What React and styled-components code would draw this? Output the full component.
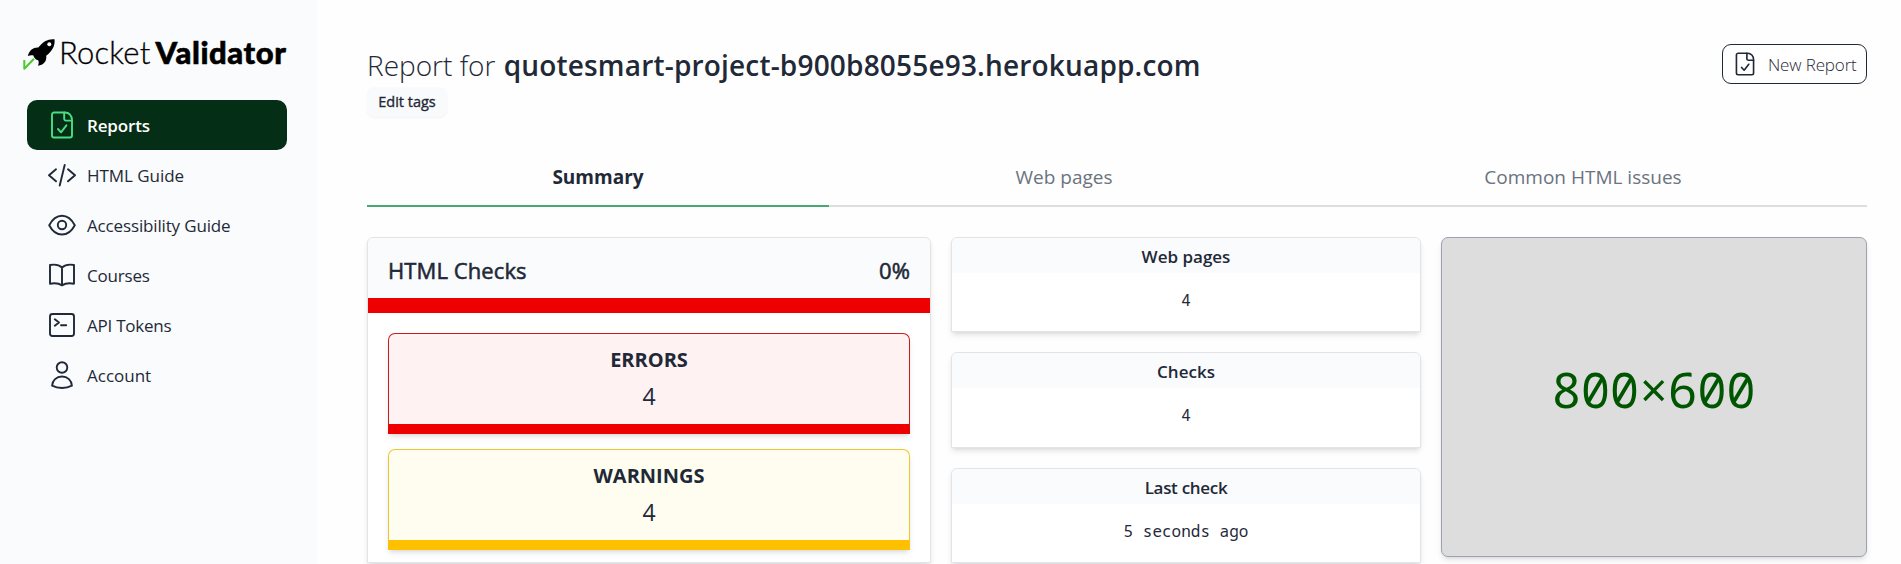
import React from "react";
import styled, { createGlobalStyle } from "styled-components";

const GlobalStyle = createGlobalStyle`
  *, *::before, *::after { box-sizing: border-box; }
  body {
    margin: 0;
    background: #fefefe;
    color: #1f2937;
    font-family: "Open Sans", "Noto Sans", sans-serif;
    overflow: hidden;
  }
`;

const Page = styled.div`
  display: flex;
  height: 564px;
  overflow: hidden;
`;

const Sidebar = styled.aside`
  flex: 0 0 317px;
  height: 564px;
  padding: 36px 30px 0 27px;
  background: #f9fbfd;
`;

const Logo = styled.div`
  display: flex;
  align-items: flex-start;
  height: 64px;
  margin-left: -5px;
  color: #000;
  font-family: Lato, sans-serif;
  font-size: 31px;
  line-height: 32px;
  white-space: nowrap;
`;

const LogoMark = styled.svg`
  flex: none;
  width: 37px;
  height: 36px;
`;

const LogoLight = styled.span`
  font-weight: 300;
  letter-spacing: 0.2px;
  -webkit-text-stroke: 0.3px currentColor;
`;

const LogoBold = styled.span`
  margin-left: 5px;
  font-weight: 900;
  letter-spacing: 0.6px;
  -webkit-text-stroke: 0.6px currentColor;
`;

const NavItem = styled.a`
  display: flex;
  align-items: center;
  gap: 11px;
  height: 50px;
  padding-left: 21px;
  border-radius: 10px;
  background: ${(p) => (p.$active ? "#052e16" : "transparent")};
  color: ${(p) => (p.$active ? "#4ade80" : "#1f2937")};
`;

const NavLabel = styled.span`
  padding-top: 1px;
  color: ${(p) => (p.$active ? "#fff" : "#1f2937")};
  font-size: 17px;
  font-weight: ${(p) => (p.$active ? 600 : 400)};
  letter-spacing: ${(p) => p.$spacing || 0}px;
  line-height: 24px;
  white-space: nowrap;
`;

const Icon = styled.svg`
  flex: none;
  width: ${(p) => p.$size || 28}px;
  height: ${(p) => p.$size || 28}px;
  fill: none;
  stroke: currentColor;
  stroke-width: 1.9;
  stroke-linecap: round;
  stroke-linejoin: round;
`;

const Main = styled.main`
  flex: 1;
  min-width: 0;
  padding: 44px 34px 0 50px;
`;

const Header = styled.header`
  display: flex;
  justify-content: space-between;
  align-items: flex-start;
  height: 110px;
`;

const Title = styled.h1`
  margin: 0;
  font-size: 28px;
  font-weight: 300;
  line-height: 43px;
  white-space: pre;
`;

const TitleSite = styled.strong`
  margin-left: 1px;
  font-weight: 600;
  letter-spacing: 0.18px;
`;

const TagButton = styled.button`
  display: block;
  width: 80px;
  height: 30px;
  padding: 0;
  border: 0;
  border-radius: 8px;
  background: #f9fafc;
  box-shadow: 0 1px 2px rgba(0, 0, 0, 0.05);
  color: #1f2937;
  font: 400 14.5px/28px "Open Sans", sans-serif;
  -webkit-text-stroke: 0.35px currentColor;
`;

const OutlineButton = styled.button`
  display: flex;
  align-items: center;
  width: 145px;
  height: 40px;
  padding: 0 0 0 10px;
  gap: 11px;
  border: 1px solid #1f2937;
  border-radius: 9px;
  background: #fff;
  color: #1f2937;
  font: 300 17px/24px "Open Sans", sans-serif;
  letter-spacing: -0.15px;
  white-space: nowrap;
`;

const ButtonLabel = styled.span`
  padding-top: 2px;
`;

const Tabs = styled.nav`
  display: flex;
`;

const Tab = styled.a`
  flex: ${(p) => p.$grow} 1 0;
  height: 53px;
  border-bottom: 2px solid ${(p) => (p.$active ? "#48a874" : "#dcdee0")};
  color: ${(p) => (p.$active ? "#1f2937" : "#6b7280")};
  font-size: 19px;
  font-weight: ${(p) => (p.$active ? 700 : 400)};
  line-height: 46px;
  text-align: center;
`;

const Columns = styled.div`
  display: flex;
  align-items: flex-start;
  gap: 20px;
  margin-top: 30px;
`;

const Card = styled.section`
  border: 1px solid #e2e4e7;
  border-radius: 6px 6px 0 0;
  background: #fff;
  box-shadow: 0 4px 6px -1px rgba(0, 0, 0, 0.1), 0 2px 4px -2px rgba(0, 0, 0, 0.1);
`;

const ChecksCard = styled(Card)`
  flex: 0 0 564px;
  height: 326px;
`;

const ChecksHeader = styled.header`
  display: flex;
  justify-content: space-between;
  height: 60px;
  padding: 0 20px;
  border-radius: 6px 6px 0 0;
  background: #f9fbfd;
  font-size: 22px;
  font-weight: 400;
  letter-spacing: 0.1px;
  line-height: 64px;
  -webkit-text-stroke: 0.55px currentColor;
`;

const ProgressBar = styled.div`
  height: 15px;
  background: #ee0000;
`;

const Tallies = styled.div`
  display: flex;
  flex-direction: column;
  gap: 15px;
  padding: 20px 20px 0;
`;

const Tally = styled.a`
  display: flex;
  flex-direction: column;
  height: 101px;
  padding-top: 12px;
  border: 1px solid ${(p) => p.$line};
  border-bottom: 10px solid ${(p) => p.$bar};
  border-radius: 7px 7px 0 0;
  background: ${(p) => p.$fill};
  box-shadow: 0 4px 6px -1px rgba(0, 0, 0, 0.1), 0 2px 4px -2px rgba(0, 0, 0, 0.1);
  text-align: center;
`;

const TallyLabel = styled.span`
  font-size: 20px;
  font-weight: 700;
  line-height: 27px;
`;

const TallyCount = styled.span`
  margin-top: 7px;
  font-size: 23px;
  line-height: 32px;
`;

const Stats = styled.div`
  flex: 0 0 470px;
  display: flex;
  flex-direction: column;
  gap: 20px;
`;

const StatCard = styled(Card)`
  height: ${(p) => p.$height}px;
  text-align: center;
`;

const StatLabel = styled.h2`
  height: 35px;
  margin: 0;
  border-radius: 6px 6px 0 0;
  background: #f9fbfd;
  font-size: 17px;
  font-weight: 600;
  letter-spacing: ${(p) => p.$spacing || 0}px;
  line-height: 37px;
`;

const StatValue = styled.div`
  font-family: "Noto Sans Mono", "DejaVu Sans Mono", monospace;
  font-size: 16px;
  line-height: 55px;
`;

const Screenshot = styled.figure`
  display: flex;
  align-items: center;
  justify-content: center;
  flex: 1;
  height: 320px;
  margin: 0;
  padding: 0 1px 17px 0;
  border: 1px solid #9ca3af;
  border-radius: 7px;
  background: #ddd;
  box-shadow: 0 4px 6px -1px rgba(0, 0, 0, 0.1), 0 2px 4px -2px rgba(0, 0, 0, 0.1);
  color: #005500;
  font-family: "Noto Sans Mono", "DejaVu Sans Mono", monospace;
  font-size: 49px;
  font-weight: 400;
  letter-spacing: -0.3px;
`;

const FileIcon = ({ size }) => (
  <Icon $size={size} viewBox="0 0 28 28">
    <path d="M17 1.500H6a2 2 0 0 0-2 2v21a2 2 0 0 0 2 2h16a2 2 0 0 0 2-2V9c0-4.500-3-7.500-7-7.500Z" />
    <path d="M16.200 1.500v6.300a1.800 1.800 0 0 0 1.800 1.800h5.900" />
    <path d="M10 18l3 3.300 5.400-7" />
  </Icon>
);

const CodeIcon = () => (
  <Icon viewBox="0 0 28 28">
    <path d="M8 8.300L1 14.300l7 6M20 8.300l7 6-7 6M16.700 4l-5 20.500" />
  </Icon>
);

const EyeIcon = () => (
  <Icon viewBox="0 0 28 28">
    <path d="M1.200 14.200C4.200 8.500 9 4.700 14 4.700s9.800 3.800 12.800 9.500c-3 5.700-7.800 9.300-12.800 9.300S4.200 19.900 1.200 14.200Z" />
    <circle cx="14" cy="14" r="4.200" />
  </Icon>
);

const BookIcon = () => (
  <Icon viewBox="0 0 28 28">
    <path d="M14 6.500C11 3.600 6.500 3.200 2 4v18.700c4.500-.8 9-.4 12 1.700 3-2.100 7.500-2.500 12-1.700V4c-4.500-.8-9-.4-12 2.500ZM14 6.500v17.900" />
  </Icon>
);

const TerminalIcon = () => (
  <Icon viewBox="0 0 28 28">
    <rect x="2" y="3" width="24" height="22" rx="2.500" />
    <path d="M6.800 8.300l4.200 3.200-4.200 3.200M13 14.200h5.200" />
  </Icon>
);

const UserIcon = () => (
  <Icon viewBox="0 0 28 28">
    <circle cx="14" cy="6.500" r="5.300" />
    <path d="M14 15.500c-5.500 0-9.700 4-9.900 9.200 3 1.600 6.500 2.300 9.900 2.300s6.900-.7 9.900-2.300c-.2-5.200-4.400-9.200-9.900-9.200Z" />
  </Icon>
);

const navItems = [
  { label: "Reports", icon: FileIcon, active: true, spacing: -0.15 },
  { label: "HTML Guide", icon: CodeIcon, spacing: -0.05 },
  { label: "Accessibility Guide", icon: EyeIcon, spacing: -0.15 },
  { label: "Courses", icon: BookIcon, spacing: -0.2 },
  { label: "API Tokens", icon: TerminalIcon, spacing: -0.25 },
  { label: "Account", icon: UserIcon },
];

const stats = [
  { label: "Web pages", value: "4", height: 95 },
  { label: "Checks", value: "4", height: 96 },
  { label: "Last check", value: "5 seconds ago", height: 95, spacing: -0.3 },
];

export default function App() {
  return (
    <Page>
      <GlobalStyle />
      <Sidebar>
        <Logo>
          <LogoMark viewBox="0 0 37 36">
            <path
              fill="#000"
              d="M32.500 3.300C26.500 2.600 21 5.300 16.300 11.600C11.500 11.300 7.500 14 5.800 20C8 19 10 18.900 11.500 19.500C11.700 21.500 14 24 16.200 24.300C17 26 16.800 27.800 16 29.800C21.500 29 25 25.500 24.200 19.800C30.500 15 33.300 9.500 32.500 3.300Z"
            />
            <circle cx="27.300" cy="8.300" r="2" fill="#f9fbfd" />
            <path d="M2.300 24v8.800L12 22.700" fill="none" stroke="#4fc92e" strokeWidth="2" strokeLinejoin="round" />
          </LogoMark>
          <LogoLight>Rocket</LogoLight>
          <LogoBold>Validator</LogoBold>
        </Logo>
        <nav>
          {navItems.map(({ label, icon: Glyph, active, spacing }) => (
            <NavItem key={label} $active={active}>
              <Glyph />
              <NavLabel $active={active} $spacing={spacing}>{label}</NavLabel>
            </NavItem>
          ))}
        </nav>
      </Sidebar>
      <Main>
        <Header>
          <div>
            <Title>Report for <TitleSite>quotesmart-project-b900b8055e93.herokuapp.com</TitleSite></Title>
            <TagButton>Edit tags</TagButton>
          </div>
          <OutlineButton>
            <FileIcon size={24} />
            <ButtonLabel>New Report</ButtonLabel>
          </OutlineButton>
        </Header>
        <Tabs>
          <Tab $grow={462} $active>Summary</Tab>
          <Tab $grow={470}>Web pages</Tab>
          <Tab $grow={568}>Common HTML issues</Tab>
        </Tabs>
        <Columns>
          <ChecksCard>
            <ChecksHeader>
              <span>HTML Checks</span>
              <span>0%</span>
            </ChecksHeader>
            <ProgressBar />
            <Tallies>
              <Tally $line="#c81e1e" $bar="#ee0000" $fill="#fef2f2">
                <TallyLabel>ERRORS</TallyLabel>
                <TallyCount>4</TallyCount>
              </Tally>
              <Tally $line="#eec62f" $bar="#ffc000" $fill="#fffdf0">
                <TallyLabel>WARNINGS</TallyLabel>
                <TallyCount>4</TallyCount>
              </Tally>
            </Tallies>
          </ChecksCard>
          <Stats>
            {stats.map(({ label, value, height, spacing }) => (
              <StatCard key={label} $height={height}>
                <StatLabel $spacing={spacing}>{label}</StatLabel>
                <StatValue>{value}</StatValue>
              </StatCard>
            ))}
          </Stats>
          <Screenshot>800×600</Screenshot>
        </Columns>
      </Main>
    </Page>
  );
}
